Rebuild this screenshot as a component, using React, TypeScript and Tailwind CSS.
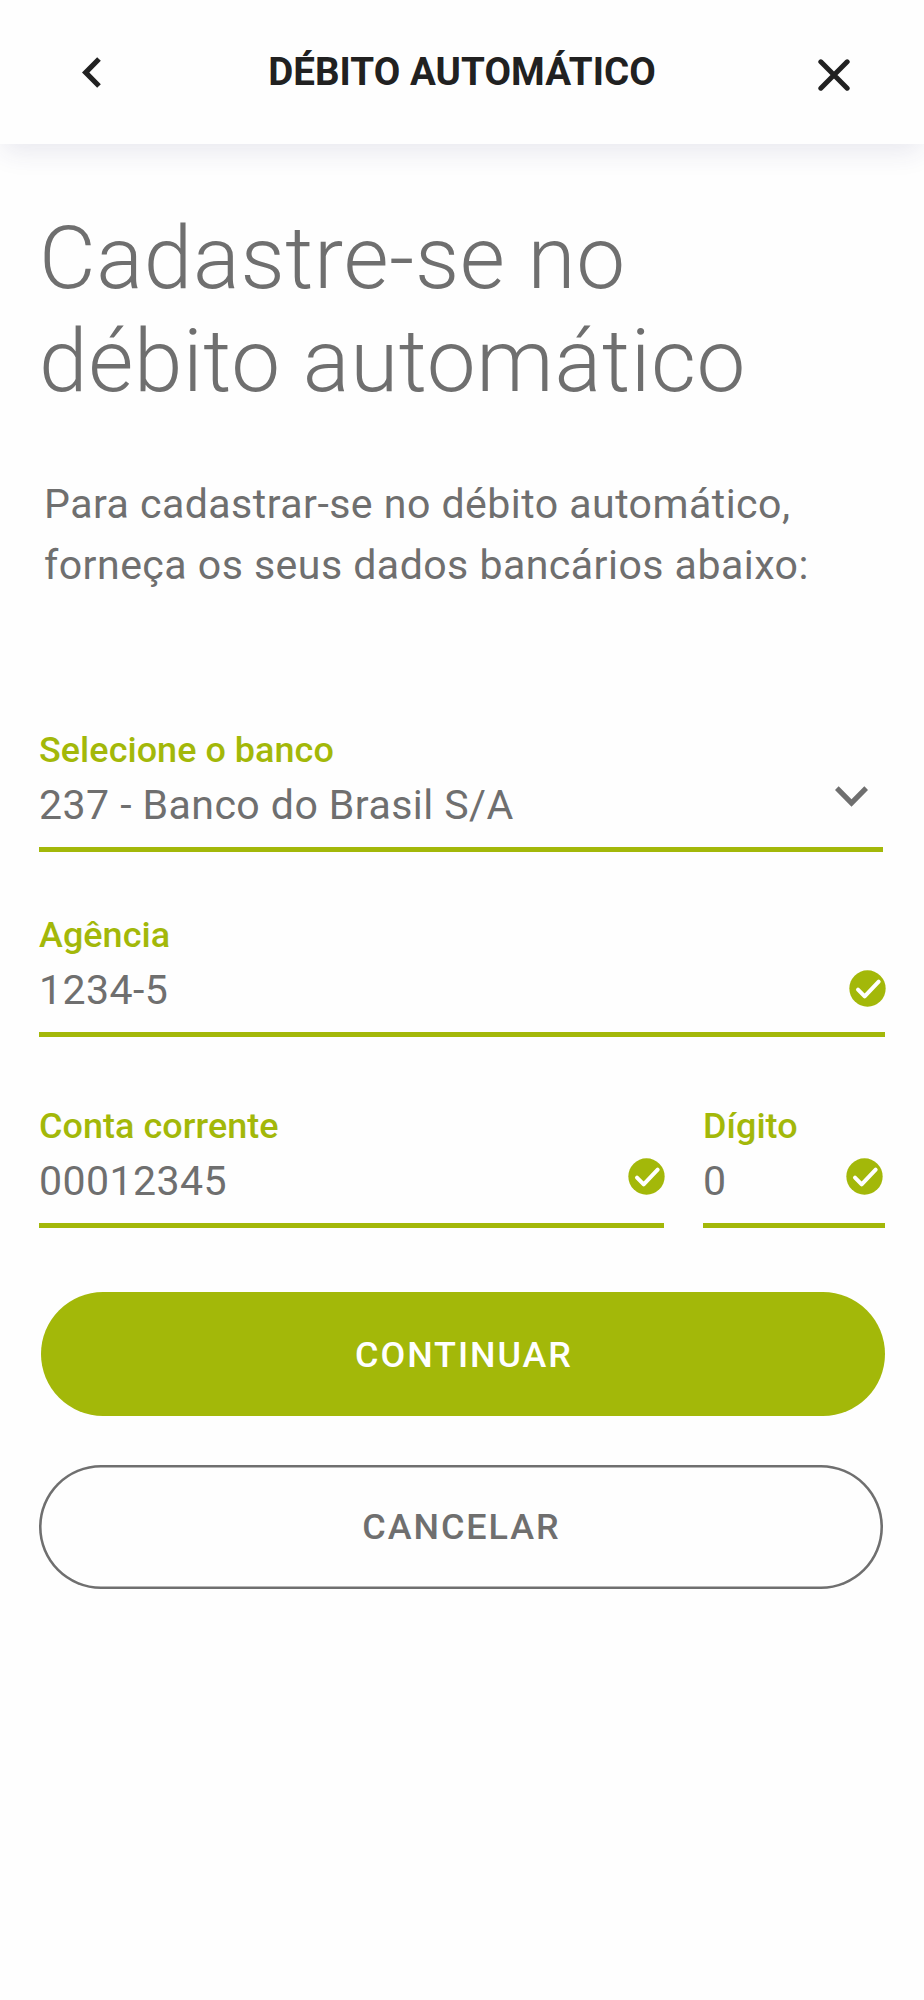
import type { ReactNode } from "react";

function BackIcon() {
  return (
    <svg className="block h-[31px] w-[19px]" viewBox="0 0 57 93" fill="#212121">
      <path d="M0 46.5 45.5 0.5 56.5 11.5 22 46.5 56.5 81.5 45.5 92.5Z" />
    </svg>
  );
}

function CloseIcon() {
  return (
    <svg className="block size-[32px]" viewBox="0 0 96 96" fill="none" stroke="#212121" strokeWidth="15" strokeLinecap="round">
      <path d="M8.5 8.5 87.5 87.5M87.5 8.5 8.5 87.5" />
    </svg>
  );
}

function ChevronDown() {
  return (
    <svg className="block h-[21px] w-[33px]" viewBox="0 0 99 63" fill="#6f6f6f">
      <path d="M0 12 11 1 49.5 39.5 88 1 99 12 49.5 62Z" />
    </svg>
  );
}

function CheckIcon() {
  return (
    <svg className="block size-[37px]" viewBox="0 0 111 111">
      <circle cx="55.5" cy="55.5" r="54.5" fill="#a3b809" />
      <path d="M27 59 47 79 89 35" fill="none" stroke="#fff" strokeWidth="12" strokeLinecap="round" strokeLinejoin="round" />
    </svg>
  );
}

type FieldProps = { label: string; value: string; icon: ReactNode; className: string };

function Field({ label, value, icon, className }: FieldProps) {
  return (
    <div className={`flex h-[123px] flex-col border-b-5 border-[#a3b809] ${className}`}>
      <span className="text-[35.93px] leading-[42px] font-medium tracking-[0.06px] text-[#a3b809]">{label}</span>
      <div className="flex flex-1 items-start justify-between">
        <span className="text-[41.07px] leading-[68px] tracking-[0.43px] text-[#6f6f6f]">{value}</span>
        {icon}
      </div>
    </div>
  );
}

export default function App() {
  return (
    <div className="min-h-[2000px] w-[924px] bg-[#fefefe] font-['Roboto',sans-serif]">
      <header className="flex h-[144px] items-center justify-between bg-[#fefefe] pr-[74px] pl-[82px] shadow-[0_10px_26px_-3px_rgba(50,50,110,0.11)]">
        <button className="mt-px">
          <BackIcon />
        </button>
        <h1 className="pl-[5px] text-[38.5px] leading-[48px] font-bold tracking-[0.06px] text-[#212121]">DÉBITO AUTOMÁTICO</h1>
        <button className="mt-[5px]">
          <CloseIcon />
        </button>
      </header>

      <main className="pt-[63px] pl-[39px]">
        <h2 className="text-[87.27px] leading-[103px] font-light tracking-[0.68px] text-[#6f6f6f]">
          Cadastre-se no
          <br />
          débito automático
        </h2>
        <p className="mt-[60.6px] pl-[5px] text-[41.07px] leading-[61.6px] tracking-[0.46px] text-[#6f6f6f]">
          Para cadastrar-se no débito automático,
          <br />
          forneça os seus dados bancários abaixo:
        </p>

        <form className="mt-[132.2px]">
          <Field
            label="Selecione o banco"
            value="237 - Banco do Brasil S/A"
            icon={<span className="mt-[15px] mr-[15px]"><ChevronDown /></span>}
            className="w-[844px]"
          />
          <Field
            label="Agência"
            value="1234-5"
            icon={<span className="-mr-px mt-[14px]"><CheckIcon /></span>}
            className="mt-[62px] w-[846px]"
          />
          <div className="mt-[68px] flex gap-[39px]">
            <Field
              label="Conta corrente"
              value="00012345"
              icon={<span className="mt-[11px] -mr-[0.5px]"><CheckIcon /></span>}
              className="w-[625px]"
            />
            <Field
              label="Dígito"
              value="0"
              icon={<span className="mt-[11px] mr-[2px]"><CheckIcon /></span>}
              className="w-[182px]"
            />
          </div>
          <button className="mt-[64px] ml-[2px] flex h-[124px] w-[844px] items-center justify-center rounded-full bg-[#a3b809] pt-[2px] pl-[2px] text-[35.93px] leading-[42px] font-medium tracking-[1.95px] text-white">
            CONTINUAR
          </button>
          <button className="mt-[49px] flex h-[124px] w-[844px] items-center justify-center rounded-full pl-px text-[35.93px] leading-[42px] font-medium tracking-[1.95px] text-[#6f6f6f] shadow-[inset_0_0_0_2.57px_#6f6f6f]">
            CANCELAR
          </button>
        </form>
      </main>
    </div>
  );
}
